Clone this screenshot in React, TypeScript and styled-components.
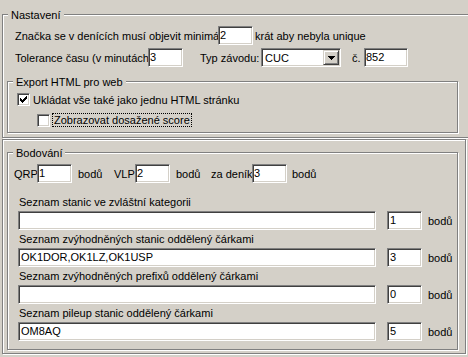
import React from "react";
import styled, { createGlobalStyle } from "styled-components";

const GlobalStyle = createGlobalStyle`
  html, body { margin: 0; padding: 0; background: #d4d0c8; overflow: hidden; }
  body { font-family: "Liberation Sans", Arial, sans-serif; font-size: 11px; color: #000; }
  * { box-sizing: border-box; }
`;

const Page = styled.div`
  width: 468px;
  height: 357px;
  overflow: hidden;
  display: flex;
  flex-direction: column;
  padding: 14px 0 0 2px;
  background: #d4d0c8;
`;

const GroupBox = styled.div<{ $w: number; $h: number; $mt?: number; $ml?: number }>`
  display: flex;
  flex-direction: column;
  flex: none;
  width: ${(p) => p.$w}px;
  height: ${(p) => p.$h}px;
  margin-top: ${(p) => p.$mt ?? 0}px;
  margin-left: ${(p) => p.$ml ?? 0}px;
  border: 1px solid #808080;
  box-shadow: inset 1px 1px #fff, 1px 1px #fff;
`;

const Panel = styled.div`
  display: flex;
  flex-direction: column;
  flex: none;
  width: 464px;
  height: 215px;
  margin-top: 1px;
  padding: 12px 0 0 4px;
  border: 1px solid #808080;
  box-shadow: inset 1px 1px #fff, 1px 1px #fff;
`;

const Legend = styled.div`
  align-self: flex-start;
  margin: -7px 0 0 5px;
  padding: 0 3px;
  height: 14px;
  line-height: 14px;
  background: #d4d0c8;
  white-space: nowrap;
`;

const Row = styled.div<{ $mt: number; $pl: number }>`
  display: flex;
  align-items: center;
  flex: none;
  height: 19px;
  margin-top: ${(p) => p.$mt}px;
  padding-left: ${(p) => p.$pl}px;
`;

const Label = styled.span<{ $w?: number; $ml?: number; $clip?: boolean }>`
  flex: none;
  display: block;
  ${(p) => (p.$w !== undefined ? `width: ${p.$w}px;` : "")}
  margin-left: ${(p) => p.$ml ?? 0}px;
  white-space: nowrap;
  overflow: ${(p) => (p.$clip ? "hidden" : "visible")};
  line-height: 14px;
`;

const TextBox = styled.input<{ $w: number; $ml?: number; $pad?: number }>`
  flex: none;
  width: ${(p) => p.$w}px;
  height: 19px;
  margin: 0 0 0 ${(p) => p.$ml ?? 0}px;
  padding: 0 0 1px ${(p) => p.$pad ?? 1}px;
  font-family: inherit;
  font-size: 11px;
  color: #000;
  background: #fff;
  border: 1px solid;
  border-color: #808080 #fff #fff #808080;
  box-shadow: inset 1px 1px #404040, inset -1px -1px #d4d0c8;
  outline: none;
`;

const Combo = styled.div<{ $w: number }>`
  flex: none;
  display: flex;
  align-items: center;
  width: ${(p) => p.$w}px;
  height: 19px;
  padding: 1px;
  background: #fff;
  border: 1px solid;
  border-color: #808080 #fff #fff #808080;
  box-shadow: inset 1px 1px #404040, inset -1px -1px #d4d0c8;
`;

const ComboValue = styled.span`
  flex: 1;
  padding-left: 2px;
  line-height: 14px;
`;

const ComboButton = styled.div`
  flex: none;
  display: flex;
  align-items: center;
  justify-content: center;
  width: 16px;
  height: 15px;
  background: #d4d0c8;
  border: 1px solid;
  border-color: #d4d0c8 #404040 #404040 #d4d0c8;
  box-shadow: inset 1px 1px #fff, inset -1px -1px #808080;
`;

const CheckRow = styled.div<{ $mt: number; $pl: number; $h: number }>`
  display: flex;
  align-items: center;
  flex: none;
  height: ${(p) => p.$h}px;
  margin-top: ${(p) => p.$mt}px;
  padding-left: ${(p) => p.$pl}px;
`;

const CheckBox = styled.div`
  flex: none;
  display: flex;
  align-items: center;
  justify-content: center;
  width: 13px;
  height: 13px;
  background: #fff;
  border: 1px solid;
  border-color: #808080 #fff #fff #808080;
  box-shadow: inset 1px 1px #404040, inset -1px -1px #d4d0c8;
`;

const CheckText = styled.span<{ $focus?: boolean }>`
  flex: none;
  margin-left: ${(p) => (p.$focus ? 2 : 3)}px;
  padding: 0 ${(p) => (p.$focus ? 1 : 0)}px;
  line-height: 12px;
  border: ${(p) => (p.$focus ? "1px dotted #000" : "none")};
  white-space: nowrap;
`;

const FieldLabel = styled.div<{ $mt: number }>`
  flex: none;
  height: 14px;
  line-height: 14px;
  margin-top: ${(p) => p.$mt}px;
  padding-left: 11px;
  white-space: nowrap;
`;

const Check = () => (
  <svg width="7" height="7" viewBox="0 0 7 7" shapeRendering="crispEdges">
    <path d="M0 2 L2 4 L6 0 L7 0 L7 2 L2 7 L0 5 Z" fill="#000" />
  </svg>
);

const Arrow = () => (
  <svg width="7" height="4" viewBox="0 0 7 4" shapeRendering="crispEdges">
    <path d="M0 0 H7 L3.5 4 Z" fill="#000" />
  </svg>
);

const lists = [
  { label: "Seznam stanic ve zvláštní kategorii", value: "", points: "1" },
  { label: "Seznam zvýhodněných stanic oddělený čárkami", value: "OK1DOR,OK1LZ,OK1USP", points: "3" },
  { label: "Seznam zvýhodněných prefixů oddělený čárkami", value: "", points: "0" },
  { label: "Seznam pileup stanic oddělený čárkami", value: "OM8AQ", points: "5" },
];

export default function App() {
  return (
    <>
      <GlobalStyle />
      <Page>
        <GroupBox $w={500} $h={124}>
          <Legend>Nastavení</Legend>
          <Row $mt={4} $pl={12}>
            <Label $w={203} $clip>Značka se v denících musí objevit minimálně</Label>
            <TextBox $w={35} defaultValue="2" readOnly />
            <Label $ml={2}>krát aby nebyla unique</Label>
          </Row>
          <Row $mt={3} $pl={12}>
            <Label $w={133} $clip>Tolerance času (v minutách)</Label>
            <TextBox $w={35} defaultValue="3" readOnly />
            <Label $ml={17} $w={61}>Typ závodu:</Label>
            <Combo $w={80}>
              <ComboValue>CUC</ComboValue>
              <ComboButton>
                <Arrow />
              </ComboButton>
            </Combo>
            <Label $ml={11} $w={12}>č.</Label>
            <TextBox $w={44} defaultValue="852" readOnly />
          </Row>
          <GroupBox $w={451} $h={52} $mt={14} $ml={4}>
            <Legend>Export HTML pro web</Legend>
            <CheckRow $mt={4} $pl={9} $h={13}>
              <CheckBox>
                <Check />
              </CheckBox>
              <CheckText>Ukládat vše také jako jednu HTML stránku</CheckText>
            </CheckRow>
            <CheckRow $mt={7} $pl={29} $h={14}>
              <CheckBox />
              <CheckText $focus>Zobrazovat dosažené score</CheckText>
            </CheckRow>
          </GroupBox>
        </GroupBox>
        <Panel>
          <GroupBox $w={451} $h={198}>
            <Legend>Bodování</Legend>
            <Row $mt={4} $pl={6}>
              <Label $w={23}>QRP</Label>
              <TextBox $w={35} defaultValue="1" readOnly />
              <Label $ml={6} $w={24}>bodů</Label>
              <Label $ml={12} $w={21}>VLP</Label>
              <TextBox $w={35} defaultValue="2" readOnly />
              <Label $ml={6} $w={24}>bodů</Label>
              <Label $ml={11} $w={41}>za deník</Label>
              <TextBox $w={35} defaultValue="3" readOnly />
              <Label $ml={5} $w={26}>bodů</Label>
            </Row>
            {lists.map((l, i) => (
              <React.Fragment key={l.label}>
                <FieldLabel $mt={i === 0 ? 12 : 2}>{l.label}</FieldLabel>
                <Row $mt={2} $pl={10}>
                  <TextBox $w={358} $pad={2} defaultValue={l.value} readOnly />
                  <TextBox $w={35} $ml={11} $pad={2} defaultValue={l.points} readOnly />
                  <Label $ml={6}>bodů</Label>
                </Row>
              </React.Fragment>
            ))}
          </GroupBox>
        </Panel>
      </Page>
    </>
  );
}
